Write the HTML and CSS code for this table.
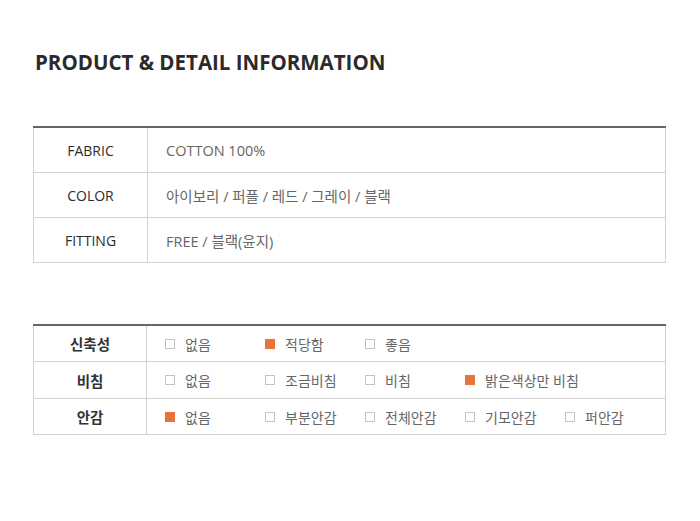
FILE: index.html
```html
<!DOCTYPE html>
<html lang="ko">
<head>
<meta charset="utf-8">
<link rel="stylesheet" href="styles.css">
</head>
<body>
<div class="page">
  <h1 class="title">PRODUCT &amp; DETAIL INFORMATION</h1>

  <table class="info">
    <tr><th>FABRIC</th><td>COTTON 100%</td></tr>
    <tr><th>COLOR</th><td>아이보리 / 퍼플 / 레드 / 그레이 / 블랙</td></tr>
    <tr><th>FITTING</th><td>FREE / 블랙(윤지)</td></tr>
  </table>

  <table class="info detail">
    <tr>
      <th>신축성</th>
      <td><div class="opts">
        <span class="opt"><i class="box"></i>없음</span>
        <span class="opt"><i class="box on"></i>적당함</span>
        <span class="opt"><i class="box"></i>좋음</span>
      </div></td>
    </tr>
    <tr class="mid">
      <th>비침</th>
      <td><div class="opts">
        <span class="opt"><i class="box"></i>없음</span>
        <span class="opt"><i class="box"></i>조금비침</span>
        <span class="opt"><i class="box"></i>비침</span>
        <span class="opt"><i class="box on"></i>밝은색상만 비침</span>
      </div></td>
    </tr>
    <tr>
      <th>안감</th>
      <td><div class="opts">
        <span class="opt"><i class="box on"></i>없음</span>
        <span class="opt"><i class="box"></i>부분안감</span>
        <span class="opt"><i class="box"></i>전체안감</span>
        <span class="opt"><i class="box"></i>기모안감</span>
        <span class="opt"><i class="box"></i>퍼안감</span>
      </div></td>
    </tr>
  </table>
</div>
</body>
</html>
```

FILE: styles.css
```css
html, body {
  margin: 0;
  padding: 0;
  background: #fff;
}
body {
  font-family: "Open Sans", "Noto Sans CJK KR", sans-serif;
  color: #333;
}
.page {
  width: 633px;
  padding: 48px 0 0 33px;
}
.title {
  margin: 0 0 0 2px;
  font-size: 20.5px;
  font-weight: 700;
  line-height: 28px;
  color: #2b2b2b;
  letter-spacing: 0;
}
.info {
  width: 633px;
  border-collapse: collapse;
  margin-top: 50px;
  font-size: 14.5px;
}
.info th, .info td {
  border: 1px solid #d2d2d2;
  height: 44px;
  padding: 0;
}
.info tr:first-child th, .info tr:first-child td {
  border-top: 2px solid #666;
}
.info th {
  width: 113px;
  font-size: 14px;
  font-weight: 400;
  color: #2b2b2b;
  text-align: center;
}
.info td {
  text-align: left;
  padding-left: 18px;
  color: #666;
}
.detail {
  margin-top: 61px;
}
.detail th, .detail td {
  height: 35px;
}
.detail .mid th, .detail .mid td {
  height: 36px;
}
.detail th {
  font-size: 14.5px;
  font-weight: 700;
  color: #333;
}
.opts {
  display: flex;
  font-size: 14px;
}
.opt {
  flex: 0 0 100px;
  display: flex;
  align-items: center;
  white-space: nowrap;
  color: #666;
}
.box {
  flex: 0 0 auto;
  width: 10px;
  height: 10px;
  border: 1px solid #c4c4c4;
  box-sizing: border-box;
  margin-right: 10px;
  display: inline-block;
}
.box.on {
  background: #e8733a;
  border-color: #e8733a;
}
```
